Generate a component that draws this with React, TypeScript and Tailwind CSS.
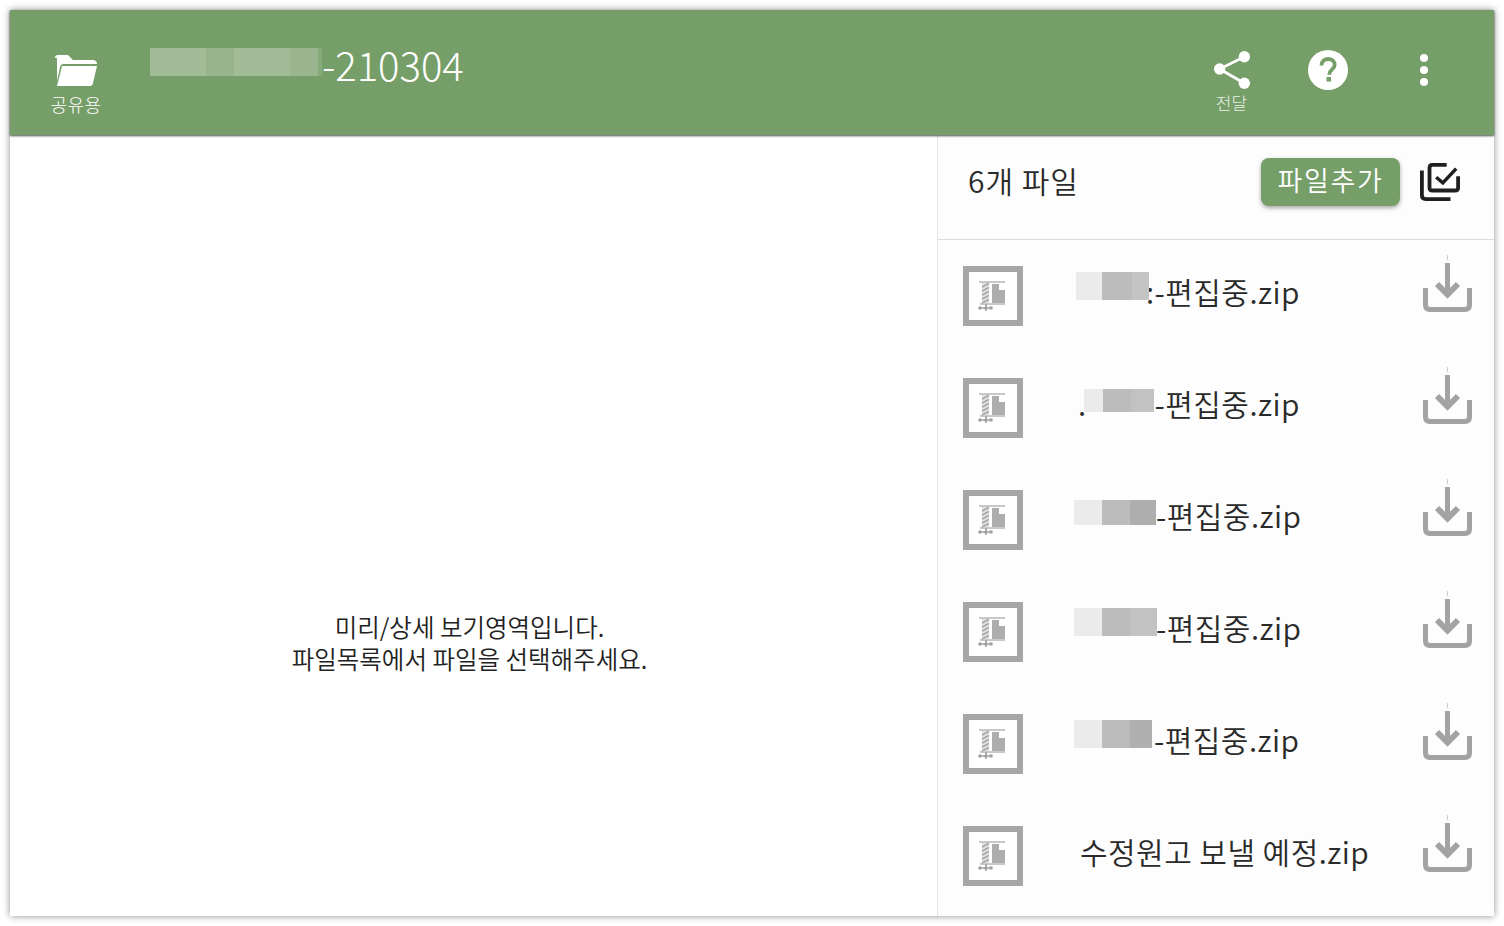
import React from "react";

function ZipIcon() {
  return (
    <div className="w-[60px] h-[60px] shrink-0 border-[6px] border-[#a6a6a6] bg-white flex items-center justify-center">
      <svg width="32" height="34" viewBox="0 0 32 34" fill="none">
        <path d="M2 3h26" stroke="#b0b0b0" strokeWidth="1.400" />
        <path d="M5 4h7v20H5z" fill="#e0e0e0" />
        <path d="M5 8l7-3.500M5 12l7-3.500M5 16l7-3.500M5 20l7-3.500M5 24l7-3.500" stroke="#a8a8a8" strokeWidth="1.800" />
        <path d="M15 5h7l6 6v13H15z" fill="#adadad" />
        <path d="M22 4.500v6.500h6.500z" fill="#fff" />
        <path d="M3 25h25" stroke="#aaa" strokeWidth="1.300" />
        <path d="M9 25v7M2 29h13" stroke="#a0a0a0" strokeWidth="1.600" />
        <circle cx="3" cy="29" r="1.800" fill="#a0a0a0" />
        <circle cx="9" cy="29" r="1.800" fill="#a0a0a0" />
        <circle cx="14" cy="29" r="1.800" fill="#a0a0a0" />
      </svg>
    </div>
  );
}

function DownloadIcon() {
  return (
    <svg width="52" height="84" viewBox="0 0 52 84" fill="none" className="shrink-0">
      <path d="M25.500 1v5" stroke="#cfcfcf" strokeWidth="1" />
      <path d="M25.500 9v33" stroke="#a3a3a3" strokeWidth="5" />
      <path d="M15 30 25.500 40.500 36 30" stroke="#a3a3a3" strokeWidth="6" />
      <path d="M3.500 34v17q0 4.500 4.500 4.500h35q4.500 0 4.500-4.500V34" stroke="#a3a3a3" strokeWidth="5" />
    </svg>
  );
}

type Seg = [number, string];

function Row({ segs, h, pre, lead, name, gap, top, pl = 70 }: { segs: Seg[]; h: number; pre?: boolean; lead?: string; name: string; gap: number; top: number; pl?: number }) {
  return (
    <div className="h-[112px] flex items-center pl-[25px] pr-[20px]">
      <ZipIcon />
      <div className="flex-1 flex items-center pb-[10px] text-[30px] tracking-[0.450px] leading-[40px] text-[#2a2a2a] whitespace-nowrap font-[350]" style={{ paddingLeft: pl - 17 }}>
        {pre && <span className="mr-[-3px]">.</span>}
        {segs.length > 0 && (
          <span className="flex relative" style={{ height: h, marginRight: gap, top }}>
            {segs.map(([w, c], i) => (
              <span key={i} className="block h-full" style={{ width: w, background: c }} />
            ))}
          </span>
        )}
        {lead}
        {name}
      </div>
      <DownloadIcon />
    </div>
  );
}

export default function App() {
  return (
    <div
      className="w-[1504px] h-[926px] p-[10px] bg-white overflow-hidden"
      style={{ fontFamily: '"Noto Sans CJK KR", "Noto Sans", sans-serif' }}
    >
      <div className="w-full h-full flex flex-col bg-white shadow-[0_0_7px_rgba(0,0,0,0.45)]">
        <header className="h-[125px] shrink-0 bg-[#769e68] flex text-white shadow-[0_1px_2px_rgba(0,0,0,0.7)] relative z-10">
          <div className="w-[132px] shrink-0 flex flex-col items-center pt-[43px]">
            <svg width="44" height="34" viewBox="0 0 44 34" fill="white">
              <path d="M0 4q0-3 3-3h10l5 5h20q3 0 4 3v1H8q-2 0-3 3L2 27V4Z" transform="translate(1 1)" />
              <path d="M8 13h35l-4 17q-.5 3-3 3H3Z" />
            </svg>
            <span className="text-[18px] tracking-[0.5px] leading-[24px] mt-[5px] font-light">공유용</span>
          </div>
          <div className="flex pt-[38px] pl-[8px] flex-1">
            <span className="flex h-[28px]">
              <span className="block w-[56px] bg-[#a2bc97]" />
              <span className="block w-[28px] bg-[#98b48c]" />
              <span className="block w-[56px] bg-[#a2bc97]" />
              <span className="block w-[28px] bg-[#9bb68f]" />
              <span className="block w-[4px] bg-[#86aa7a]" />
            </span>
            <span className="text-[40px] leading-[32px] font-light">-210304</span>
          </div>
          <div className="flex w-[99px] flex-col items-center pt-[40px] pl-[2px]">
            <svg width="38" height="40" viewBox="0 0 40 42" fill="white">
              <circle cx="33" cy="7" r="6" />
              <circle cx="7" cy="20" r="6" />
              <circle cx="33" cy="35" r="6" />
              <path d="M33 7 7 20l26 15" fill="none" stroke="white" strokeWidth="3" />
            </svg>
            <span className="text-[17px] leading-[20px] mt-[3px] text-[#e8efe5] font-light">전달</span>
          </div>
          <div className="w-[96px] flex justify-center pt-[39px]">
            <svg width="42" height="42" viewBox="0 0 42 42">
              <circle cx="21" cy="21" r="20" fill="white" />
              <path d="M14.500 16.500c0-4 3-6.500 6.700-6.500 3.800 0 6.500 2.400 6.500 5.700 0 4.800-5.500 4.700-5.500 10" fill="none" stroke="#769e68" strokeWidth="3.800" />
              <rect x="19.500" y="28" width="4.500" height="4.500" fill="#769e68" />
            </svg>
          </div>
          <div className="w-[96px] mr-[22px] flex flex-col items-center gap-[4px] pt-[44px]">
            <span className="block w-[8px] h-[8px] rounded-full bg-white" />
            <span className="block w-[8px] h-[8px] rounded-full bg-white" />
            <span className="block w-[8px] h-[8px] rounded-full bg-white" />
          </div>
        </header>
        <div className="flex flex-1 min-h-0">
          <main className="flex-1 flex flex-col items-center pt-[476px] pr-[8px] text-[24.500px] leading-[32px] text-[#222] font-[350]">
            <p>미리/상세 보기영역입니다.</p>
            <p>파일목록에서 파일을 선택해주세요.</p>
          </main>
          <aside className="w-[557px] shrink-0 border-l border-[#e2e2e2] bg-[#fdfdfd] flex flex-col">
            <div className="h-[105px] shrink-0 border-b border-[#dcdcdc] flex items-center pl-[30px] pr-[34px]">
              <span className="text-[30px] tracking-[1px] leading-[40px] text-[#2a2a2a] flex-1 mb-[14px] font-[350]">6개 파일</span>
              <button className="w-[139px] h-[48px] mb-[11px] rounded-[8px] bg-[#769e68] text-white text-[27px] font-[350] tracking-[1.600px] shadow-[0_2px_4px_rgba(0,0,0,0.35)] pb-[2px]">
                파일추가
              </button>
              <svg width="40" height="40" viewBox="0 0 42 42" fill="none" className="ml-[20px] mb-[13px]" stroke="#1f1f1f" strokeWidth="4">
                <path d="M2 10v26q0 4 4 4h26" />
                <path d="M28 4H13q-3 0-3 3v21q0 3 3 3h24q3 0 3-3V16" />
                <path d="M17 17l7 6L38 8" strokeWidth="3.600" />
              </svg>
            </div>
            <Row segs={[[26, "#ebebeb"], [30, "#bcbcbc"], [17, "#c4c4c4"]]} h={28} top={-5} gap={-3} lead=":" name="-편집중.zip" />
            <Row pl={72} pre segs={[[19, "#ebebeb"], [28, "#bcbcbc"], [23, "#c2c2c2"]]} h={23} top={-3} gap={1} name="-편집중.zip" />
            <Row pl={68} segs={[[28, "#ebebeb"], [28, "#bcbcbc"], [26, "#aeaeae"]]} h={25} top={-3} gap={0} name="-편집중.zip" />
            <Row pl={68} segs={[[28, "#ebebeb"], [28, "#bcbcbc"], [27, "#c2c2c2"]]} h={28} top={-5} gap={-1} name="-편집중.zip" />
            <Row pl={68} segs={[[28, "#ebebeb"], [28, "#bcbcbc"], [22, "#b0b0b0"]]} h={28} top={-5} gap={2} name="-편집중.zip" />
            <Row pl={74} segs={[]} h={0} gap={0} top={0} name="수정원고 보낼 예정.zip" />
          </aside>
        </div>
      </div>
    </div>
  );
}
